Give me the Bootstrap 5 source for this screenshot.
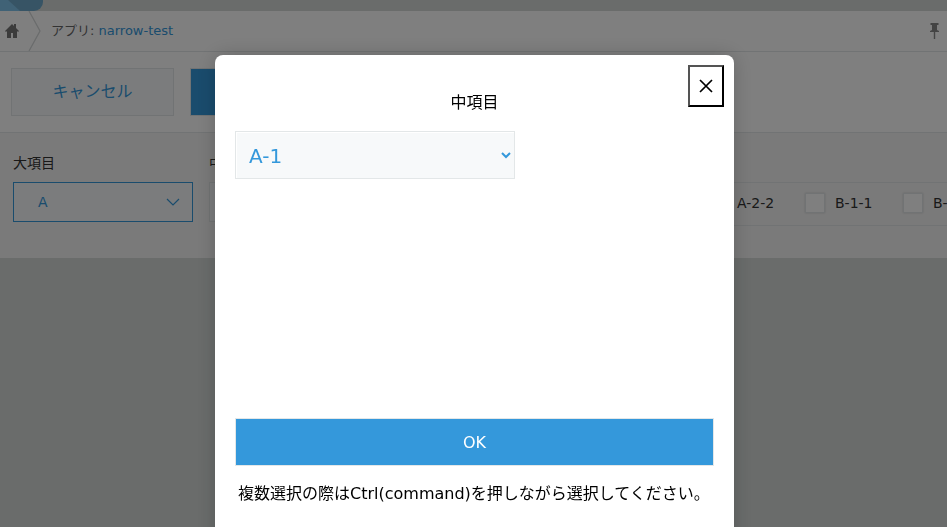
<!DOCTYPE html>
<html lang="ja">
<head>
<meta charset="utf-8">
<meta name="viewport" content="width=device-width, initial-scale=1">
<title>narrow-test</title>
<link href="https://cdn.jsdelivr.net/npm/bootstrap@5.3.0/dist/css/bootstrap.min.css" rel="stylesheet">
<style>
  body { background: #d4d9d7; color: #333; font-family: "DejaVu Sans", "Noto Sans CJK JP", sans-serif; font-size: 14px; overflow: hidden; }
  .top-strip { height: 11px; }
  .top-tab { width: 43px; height: 11px; border-radius: 0 0 9px 0; overflow: hidden; }
  .crumbs { height: 41px; border-bottom: 1px solid #e3e7e8; }
  .crumbs a { color: #3498db; }
  .crumb-text { font-size: 13px; color: #666; margin-left: 9px; }
  .crumb-arrow { width: 14px; height: 40px; margin-left: 8px; }
  .actions { height: 81px; padding: 16px 11px; gap: 16px; border-bottom: 1px solid #e3e7e8; }
  .action-btn { width: 163px; height: 48px; border: 1px solid #e3e7e8; border-radius: 0; background: #f7f9fa; color: #3498db; font-size: 16px; }
  .action-btn.save { background: #3498db; color: #fff; }
  .record { background: #f5f5f5; height: 125px; padding: 18px 13px; gap: 16px; overflow: hidden; }
  .field-name { height: 24px; line-height: 24px; margin-bottom: 7px; color: #333; }
  .drop { width: 180px; height: 40px; border: 1px solid #e3e7e8; border-radius: 0; background: #f7f9fa; color: #3498db; font-size: 14px; padding: 0 12px 0 24px; }
  .drop.chosen { border-color: #3498db; }
  .checks { height: 44px; border: 1px solid #e3e7e8; padding: 0 7px 2px; }
  .check-item { width: 98px; flex: none; }
  .check-item .form-check-input { width: 20px; height: 20px; margin: 0 10px 0 0; border: 1px solid #e3e7e8; border-radius: 0; background-color: #fff; box-shadow: 0 0 2px #ccc; }
  .veil { background: rgba(0, 0, 0, .5); z-index: 10; padding: 55px 0 0 2px; }
  .popup { max-width: 519px; min-height: 520px; padding: 36px 20px 20px; border-radius: 8px; color: #000; font-size: 16px; box-shadow: 0 0 20px rgba(0, 0, 0, .2); }
  .popup h1 { font-size: 16px; font-weight: 400; line-height: 24px; margin: 0 0 16px; }
  .close-x { top: 10px; right: 10px; width: 36px; height: 42px; background: #fff; border: 2px outset #000; padding: 0; }
  .choice { width: 280px; height: 48px; padding: 2px 0 0 9px; border: 1px solid #e3e7e8; border-radius: 0; background: #f7f9fa; color: #3498db; font-size: 20px; box-shadow: inset 1px 1px 0 #fff; }
  .choice-area { height: 287px; }
  .ok { height: 48px; border: 1px solid #e3e7e8; border-radius: 0; background: #3498db; color: #fff; font-size: 16px; padding: 2px 0 0; }
  .hint { margin: 16px 0 0 3px; line-height: 24px; white-space: nowrap; }
</style>
<script src="https://cdn.jsdelivr.net/npm/bootstrap@5.3.0/dist/js/bootstrap.bundle.min.js"></script>
</head>
<body>
<div class="top-strip">
  <svg class="top-tab d-block" viewBox="0 0 43 11" aria-hidden="true"><path d="M0 0h43v11H0z" fill="#6fa9ca"/><path d="M0 0h8l12 11H0z" fill="#80c4ec"/></svg>
</div>
<nav class="crumbs d-flex align-items-center bg-white" aria-label="breadcrumb">
  <a href="#" class="d-flex ms-1" aria-label="ホーム"><svg width="16" height="16" viewBox="0 0 16 16" fill="#777"><path d="M8 1 1 8l1 1 1-1v7h4v-5h2v5h4V8l1 1 1-1-3-3V1h-2v2z"/></svg></a>
  <svg class="crumb-arrow" viewBox="0 0 14 40" fill="none" stroke="#d5d8d9" stroke-width="1.3" aria-hidden="true"><path d="M1 0l11 20L1 40"/></svg>
  <span class="crumb-text">アプリ: <a href="#" class="text-decoration-none">narrow-test</a></span>
  <svg class="ms-auto me-2" width="9" height="16" viewBox="0 0 9 16" fill="#888" aria-label="ピン" role="img"><path d="M.5 0h8v2H7v5l2 1v1H5.200v7H3.800V9H0V8l2-1V2H.5z"/></svg>
</nav>
<div class="actions d-flex bg-white">
  <button type="button" class="btn action-btn">キャンセル</button>
  <button type="button" class="btn action-btn save">保存</button>
</div>
<main class="record d-flex">
  <div>
    <div class="field-name" id="major">大項目</div>
    <button type="button" class="drop chosen d-flex align-items-center justify-content-between" aria-labelledby="major">A
      <svg width="14" height="8" viewBox="0 0 14 8" fill="none" stroke="#3498db" stroke-width="1.200" aria-hidden="true"><path d="M1 1l6 6 6-6"/></svg>
    </button>
  </div>
  <div>
    <div class="field-name" id="middle">中項目</div>
    <button type="button" class="drop d-flex align-items-center justify-content-between" aria-labelledby="middle">A-1
      <svg width="14" height="8" viewBox="0 0 14 8" fill="none" stroke="#3498db" stroke-width="1.200" aria-hidden="true"><path d="M1 1l6 6 6-6"/></svg>
    </button>
  </div>
  <div>
    <div class="field-name">小項目</div>
    <div class="checks d-flex">
      <label class="check-item d-flex align-items-center"><input type="checkbox" class="form-check-input">A-1-1</label>
      <label class="check-item d-flex align-items-center"><input type="checkbox" class="form-check-input">A-1-2</label>
      <label class="check-item d-flex align-items-center"><input type="checkbox" class="form-check-input">A-2-1</label>
      <label class="check-item d-flex align-items-center"><input type="checkbox" class="form-check-input">A-2-2</label>
      <label class="check-item d-flex align-items-center"><input type="checkbox" class="form-check-input">B-1-1</label>
      <label class="check-item d-flex align-items-center"><input type="checkbox" class="form-check-input">B-1-2</label>
    </div>
  </div>
</main>
<div class="veil position-fixed top-0 start-0 w-100 h-100 overflow-hidden">
  <div class="popup position-relative mx-auto bg-white" role="dialog" aria-modal="true" aria-labelledby="popup-title">
    <button type="button" class="close-x position-absolute d-flex align-items-center justify-content-center" aria-label="閉じる"><svg width="14" height="14" viewBox="0 0 14 14" stroke="#000" stroke-width="1.700" aria-hidden="true"><path d="M1 1l12 12M13 1L1 13"/></svg></button>
    <h1 class="text-center" id="popup-title">中項目</h1>
    <div class="choice-area">
      <select class="choice" aria-labelledby="popup-title"><option>A-1</option><option>A-2</option></select>
    </div>
    <button type="button" class="btn ok w-100 d-block">OK</button>
    <p class="hint">複数選択の際はCtrl(command)を押しながら選択してください。</p>
  </div>
</div>
</body>
</html>
